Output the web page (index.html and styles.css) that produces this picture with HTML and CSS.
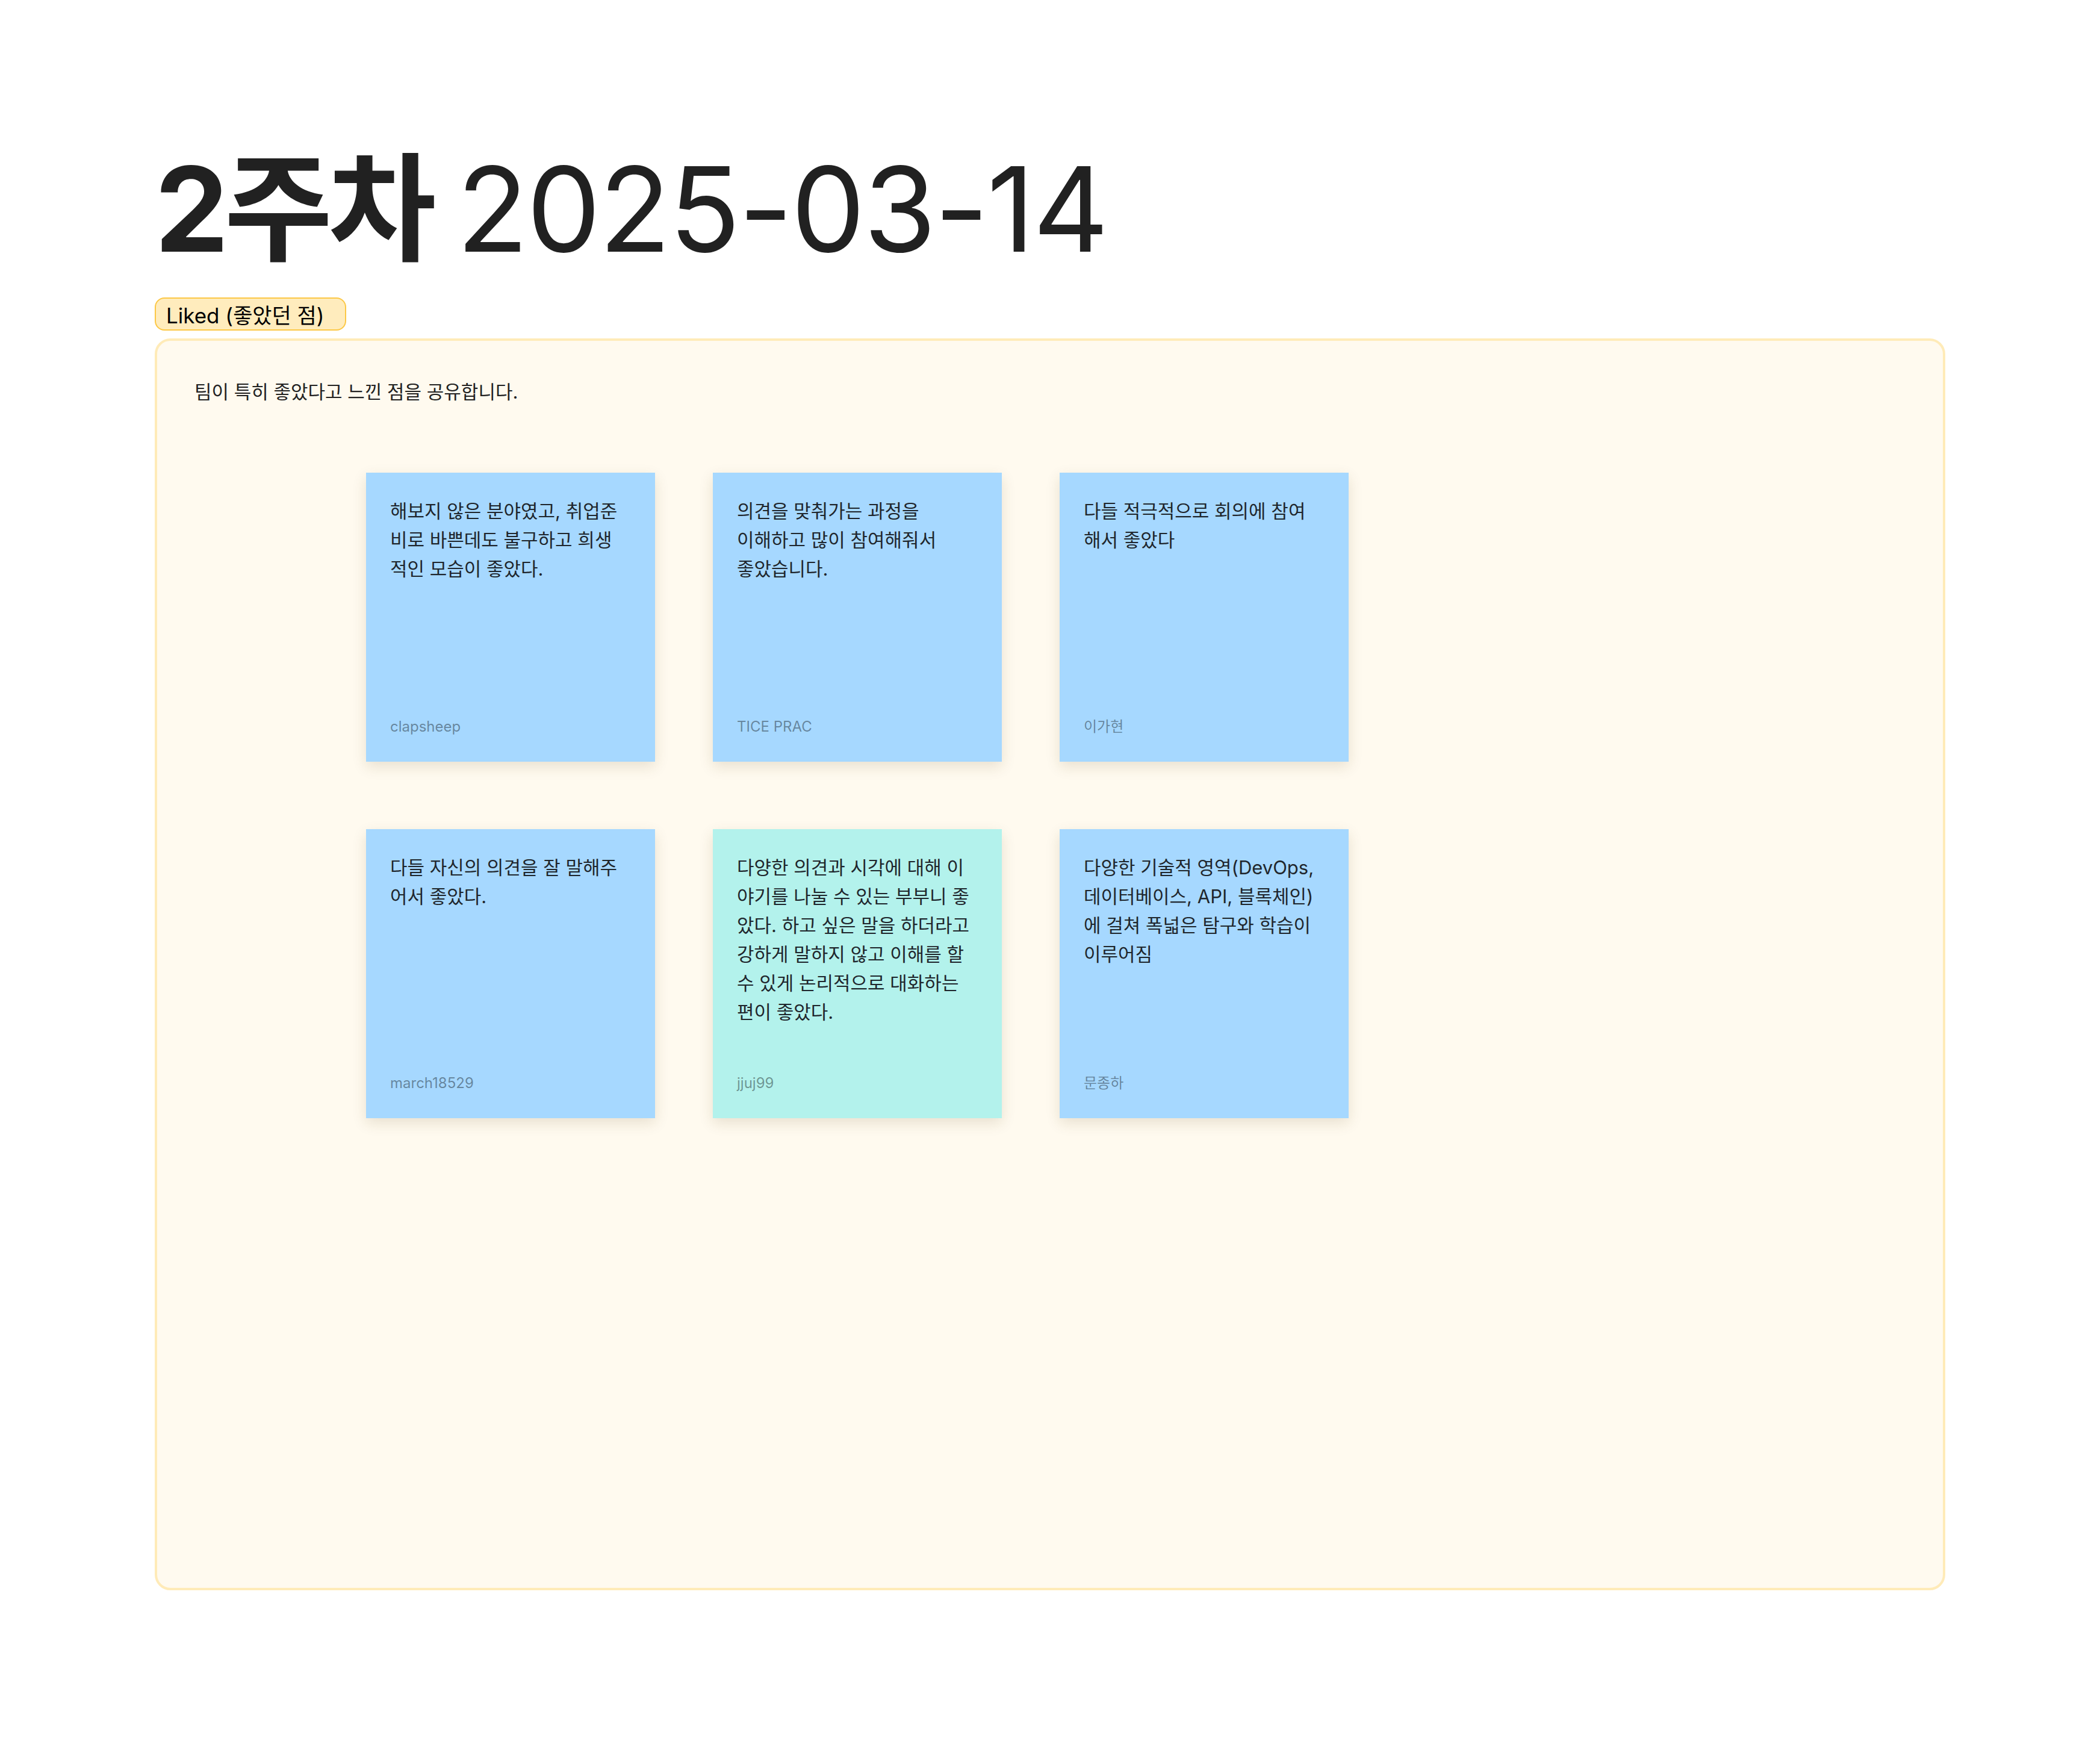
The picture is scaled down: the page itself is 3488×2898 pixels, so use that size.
FILE: index.html
```html
<!DOCTYPE html>
<html lang="ko">
<head>
<meta charset="utf-8">
<title>2주차 2025-03-14</title>
<link rel="stylesheet" href="styles.css">
</head>
<body>
<main class="page">
  <h1 class="title"><strong>2주차</strong> <span class="title-date">2025-03-14</span></h1>
  <span class="badge">Liked (좋았던 점)</span>
  <section class="board">
    <p class="board-desc">팀이 특히 좋았다고 느낀 점을 공유합니다.</p>
    <div class="notes">
      <article class="note note-blue">
        <p class="note-text">해보지 않은 분야였고, 취업준비로 바쁜데도 불구하고 희생적인 모습이 좋았다.</p>
        <p class="note-author">clapsheep</p>
      </article>
      <article class="note note-blue">
        <p class="note-text">의견을 맞춰가는 과정을<br>이해하고 많이 참여해줘서<br>좋았습니다.</p>
        <p class="note-author">TICE PRAC</p>
      </article>
      <article class="note note-blue">
        <p class="note-text">다들 적극적으로 회의에 참여해서 좋았다</p>
        <p class="note-author">이가현</p>
      </article>
      <article class="note note-blue">
        <p class="note-text">다들 자신의 의견을 잘 말해주어서 좋았다.</p>
        <p class="note-author">march18529</p>
      </article>
      <article class="note note-teal">
        <p class="note-text">다양한 의견과 시각에 대해 이야기를 나눌 수 있는 부부니 좋았다. 하고 싶은 말을 하더라고 강하게 말하지 않고 이해를 할 수 있게 논리적으로 대화하는 편이 좋았다.</p>
        <p class="note-author">jjuj99</p>
      </article>
      <article class="note note-blue">
        <p class="note-text">다양한 기술적 영역(DevOps, 데이터베이스, API, 블록체인)에 걸쳐 폭넓은 탐구와 학습이 이루어짐</p>
        <p class="note-author">문종하</p>
      </article>
    </div>
  </section>
</main>
</body>
</html>
```

FILE: styles.css
```css
* {
  box-sizing: border-box;
}

html, body {
  margin: 0;
  padding: 0;
  background: #ffffff;
}

body {
  font-family: Inter, "Noto Sans CJK KR", sans-serif;
  color: #212121;
}

.page {
  padding: 230px 257px 200px 257px;
  display: flex;
  flex-direction: column;
  align-items: flex-start;
}

.title {
  margin: 0;
  font-size: 195px;
  line-height: 1.2;
  font-weight: 400;
  color: #212121;
  white-space: nowrap;
  word-spacing: -14px;
}

.title strong {
  font-weight: 700;
  letter-spacing: -7px;
}

.title-date {
  letter-spacing: -2.7px;
}

.badge {
  margin-top: 30px;
  display: inline-block;
  height: 55px;
  padding: 6px 34px 0 17px;
  border: 2px solid #fcc846;
  border-radius: 16px;
  background: #ffecbd;
  color: #000000;
  font-size: 35px;
  line-height: 45px;
  white-space: nowrap;
}

.board {
  margin-top: 13px;
  align-self: stretch;
  height: 2079px;
  border: 4px solid #ffebb8;
  border-radius: 26px;
  background: #fffaef;
  padding: 62px;
}

.board-desc {
  margin: 0;
  font-size: 31px;
  line-height: 45px;
  color: #222222;
}

.notes {
  margin-top: 112px;
  margin-left: 285px;
  display: grid;
  grid-template-columns: repeat(3, 480px);
  gap: 112px 96px;
}

.note {
  width: 480px;
  height: 480px;
  padding: 40px 44px 40px 40px;
  display: flex;
  flex-direction: column;
  justify-content: space-between;
  box-shadow: 0 8px 22px rgba(90, 70, 20, 0.14);
}

.note-blue {
  background: #a6d8ff;
}

.note-teal {
  background: #b3f2ec;
}

.note-text {
  margin: 0;
  font-size: 31px;
  line-height: 48px;
  color: #1f262c;
}

.note-author {
  margin: 0;
  font-size: 24px;
  line-height: 36px;
  color: rgba(0, 0, 0, 0.4);
}
```
